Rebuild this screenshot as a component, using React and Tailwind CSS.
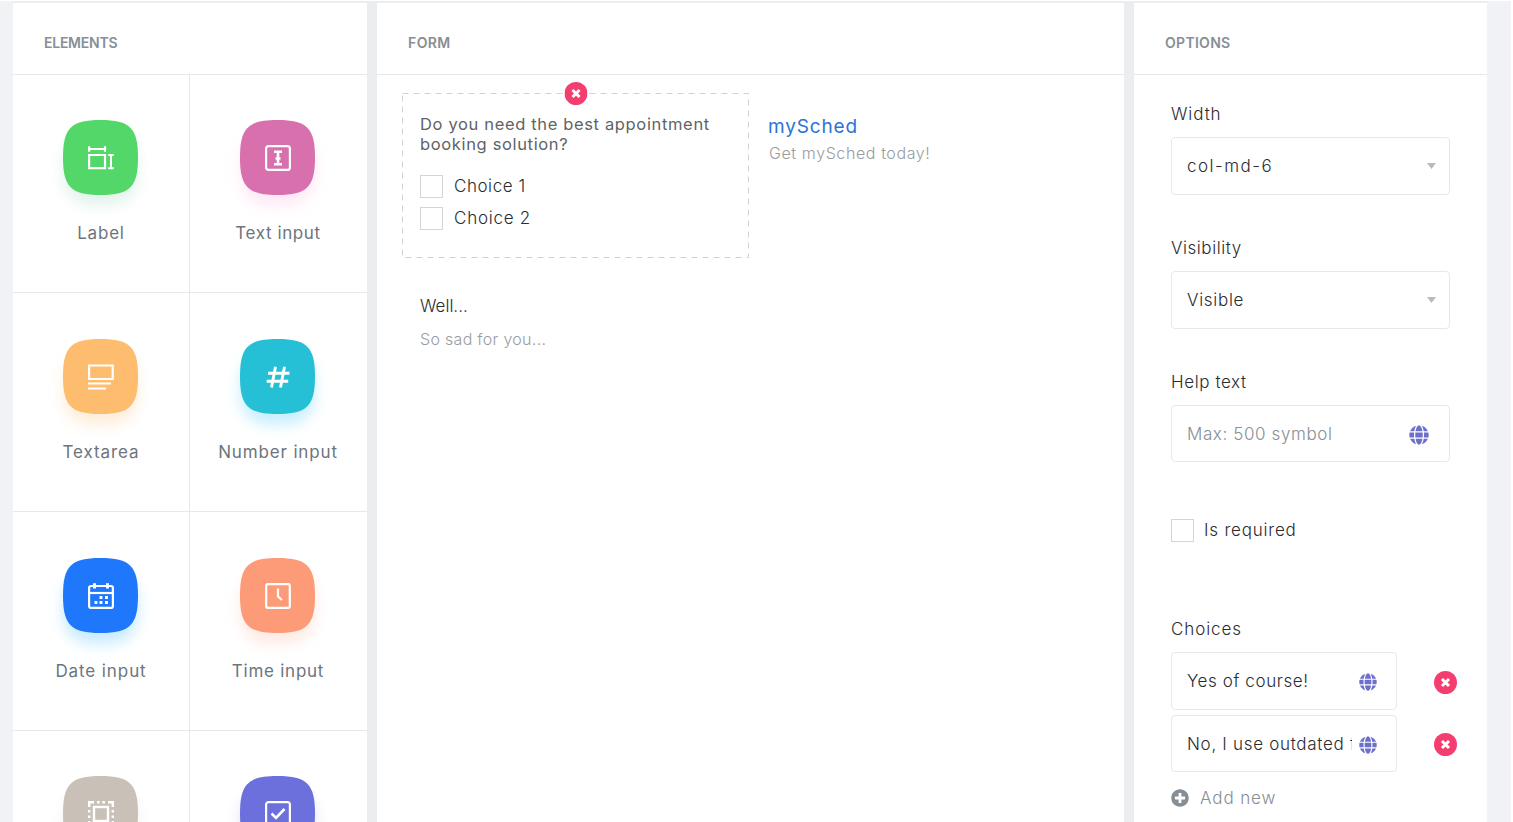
import { useState } from 'react';
import { FaGlobe, FaPlusCircle } from 'react-icons/fa';

const stroke = {
  fill: 'none',
  stroke: 'currentColor',
  strokeWidth: 2.2,
};

function LabelIcon() {
  return (
    <svg className="w-[26px] h-[26px]" viewBox="0 0 26 26" {...stroke}>
      <path d="M1.100 10h15.900v13.200H1.100zM1.500 4h15.500M1.100 1.300v5.400M17 1.300v5.400" />
      <path strokeWidth="1.900" d="M23 10v13M20.200 10h5.600M20.200 23.300h5.600" />
    </svg>
  );
}

function TextIcon() {
  return (
    <svg className="w-[26px] h-[26px]" viewBox="0 0 26 26" {...stroke}>
      <rect x="1.100" y="1.100" width="23.800" height="23.800" rx="2.500" />
      <path strokeWidth="2.600" d="M13 6.500v13M9 6.800h8M9 19.200h8M10.500 13.500h5" />
    </svg>
  );
}

function TextareaIcon() {
  return (
    <svg className="w-[26px] h-[26px]" viewBox="0 0 26 26" {...stroke}>
      <path d="M1.100 1.500h23.600v13.500H1.100zM0 19.500h23M0 24.500h18" />
    </svg>
  );
}

function NumberIcon() {
  return (
    <svg className="w-[26px] h-[26px]" viewBox="0 0 26 26" {...stroke} strokeWidth="2.900">
      <path d="M10.500 2.800L6.500 23.500M19.500 2.800L15.500 23.500M3 9.300h21.500M1.700 17.300h21.500" />
    </svg>
  );
}

function DateIcon() {
  return (
    <svg className="w-[26px] h-[26px]" viewBox="0 0 26 26" {...stroke}>
      <rect x="1.100" y="3" width="23.800" height="21.900" rx="2" />
      <path d="M1 10h24" />
      <path strokeWidth="3" d="M6.500 .3v5.200M19.500 .3v5.200" />
      <path
        strokeWidth="2.800"
        d="M11.500 14.500h2.900M17 14.500h2.900M6.500 19.500h2.900M11.500 19.500h2.900M17 19.500h2.900"
      />
    </svg>
  );
}

function TimeIcon() {
  return (
    <svg className="w-[26px] h-[26px]" viewBox="0 0 26 26" {...stroke}>
      <rect x="1.200" y="1.200" width="23.600" height="23.600" rx="1.500" />
      <path d="M13 5.500v8l4 3.500" />
    </svg>
  );
}

function SelectIcon() {
  return (
    <svg className="w-[26px] h-[26px]" viewBox="0 0 26 26" {...stroke}>
      <rect x="6" y="6" width="14" height="14" strokeWidth="2.400" />
      {/* corner brackets with two dashes between them on each side */}
      <path
        strokeWidth="2.400"
        d="M1.200 6V1.200H6M20 1.200h4.800V6M24.800 20v4.800H20M6 24.800H1.200V20M9 1.200h2.600M14.400 1.200H17M9 24.800h2.600M14.400 24.800H17M1.200 9v2.600M1.200 14.400V17M24.800 9v2.600M24.800 14.400V17"
      />
    </svg>
  );
}

function CheckIcon() {
  return (
    <svg className="w-[26px] h-[26px]" viewBox="0 0 26 26" {...stroke}>
      <rect x="1.100" y="1.100" width="23.800" height="23.800" rx="2.500" />
      <path strokeWidth="2.600" d="M6.500 12.500l4.500 4.500L19.500 8" />
    </svg>
  );
}

const elements = [
  { name: 'Label', icon: LabelIcon, color: 'text-[#53d769]', shadow: 'bg-[#53b789]/15', tracking: 'tracking-[0.8px]' },
  { name: 'Text input', icon: TextIcon, color: 'text-[#d770ad]', shadow: 'bg-[#ff70c0]/15', tracking: 'tracking-[0.6px]' },
  { name: 'Textarea', icon: TextareaIcon, color: 'text-[#fdbc6e]', shadow: 'bg-[#fdbc6e]/25', tracking: 'tracking-[0.9px]' },
  { name: 'Number input', icon: NumberIcon, color: 'text-[#26c0d6]', shadow: 'bg-[#26c0f6]/25', tracking: 'tracking-[0.85px]' },
  { name: 'Date input', icon: DateIcon, color: 'text-[#1f78fb]', shadow: 'bg-[#26b0ff]/25', tracking: 'tracking-[0.9px]' },
  { name: 'Time input', icon: TimeIcon, color: 'text-[#fd9b78]', shadow: 'bg-[#fd9b78]/20', tracking: 'tracking-[0.75px]' },
  { icon: SelectIcon, color: 'text-[#c9c0b8]', shadow: 'bg-[#c9c0b8]/20' },
  { icon: CheckIcon, color: 'text-[#6c70dc]', shadow: 'bg-[#6c70dc]/20' },
];

function ElementCard({ item }) {
  const Icon = item.icon;

  return (
    <div className="flex flex-col items-center h-[219px] pt-[46px] odd:pr-px even:pr-0.5 nth-[n+7]:pt-[45px] border-b border-r border-[#e6e8ea] even:border-r-0">
      <div className="relative w-[75px] h-[75px] flex items-center justify-center">
        <div className={`absolute inset-x-0 top-[14px] h-[72px] rounded-[28px] blur-[7px] ${item.shadow}`} />
        <svg className={`absolute inset-0 w-full h-full ${item.color}`} viewBox="0 0 75 75" fill="currentColor">
          <path d="M37.500 0C67 0 75 8 75 37.500S67 75 37.500 75 0 67 0 37.500 8 0 37.500 0z" />
        </svg>
        <div className="relative text-white">
          <Icon />
        </div>
      </div>
      {item.name && (
        <p className={`mt-[26px] pl-px text-[17px] leading-6 text-[#6c757d] font-[380] ${item.tracking}`}>{item.name}</p>
      )}
    </div>
  );
}

function PanelHeader({ title, className }) {
  return (
    <div className={`h-[72px] shrink-0 pt-2 pl-[31px] flex items-center border-b border-[#e6e8ea] ${className}`}>
      <h2 className="text-sm font-semibold text-[#868e96]">{title}</h2>
    </div>
  );
}

function RemoveButton() {
  return (
    <button className="flex">
      <svg className="w-[23px] h-[23px]" viewBox="0 0 23 23">
        <circle cx="11.500" cy="11.500" r="11.500" fill="#f43e6f" />
        <path d="M8 8l7 7M15 8l-7 7" stroke="#fff" strokeWidth="3" />
      </svg>
    </button>
  );
}

function Checkbox({ label, className }) {
  const [checked, setChecked] = useState(false);

  return (
    <label className="flex items-center">
      <input
        type="checkbox"
        checked={checked}
        onChange={(e) => setChecked(e.target.checked)}
        className="appearance-none w-[23px] h-[23px] border border-[#d3d6d9] bg-white checked:bg-[#6c70dc]"
      />
      <span className={`mb-0.5 text-[17px] leading-5 text-[#292d32] ${className}`}>{label}</span>
    </label>
  );
}

function SelectField({ label, value, labelClass, valueClass }) {
  return (
    <div className="h-[134px]">
      <p className={`text-[17px] leading-6 text-[#292d32] ${labelClass}`}>{label}</p>
      <div className="mt-[11px] h-[58px] pl-[15px] pr-[13px] flex items-center justify-between border border-[#e6e8ea] rounded-sm">
        <span className={`mt-0.5 text-[17px] text-[#292d32] ${valueClass}`}>{value}</span>
        <svg className="w-[9px] h-1.5 text-[#b4bcc0]" viewBox="0 0 9 6" fill="currentColor">
          <path d="M0 0h9L4.500 6z" />
        </svg>
      </div>
    </div>
  );
}

function ChoiceRow({ value, className, textClass }) {
  return (
    <div className="flex items-center">
      <div className={`w-[226px] shrink-0 pl-[15px] flex items-center border border-[#e6e8ea] rounded-sm ${className}`}>
        <span className={`w-[165px] mt-0.5 mr-[7px] shrink-0 overflow-hidden whitespace-nowrap text-[17px] text-[#292d32] ${textClass}`}>
          {value}
        </span>
        <FaGlobe className="w-[18px] h-[18px] mt-0.5 shrink-0 text-[#6c70cc]" />
      </div>
      <div className="ml-[37px] mt-0.5">
        <RemoveButton />
      </div>
    </div>
  );
}

export default function App() {
  return (
    <div className="h-[822px] overflow-hidden bg-[#f1f2f6] border-t border-r-2 border-white font-['Inter',sans-serif] font-[350]">
      <div className="flex gap-[10px] w-[1474px] h-full ml-[13px] pt-0.5 bg-[#ebedef]">
        <section className="w-[354px] shrink-0 bg-white">
          <PanelHeader title="ELEMENTS" className="tracking-[-0.25px]" />
          <div className="grid grid-cols-2 -mt-px">
            {elements.map((item, index) => (
              <ElementCard key={index} item={item} />
            ))}
          </div>
        </section>

        <section className="w-[747px] shrink-0 bg-white">
          <PanelHeader title="FORM" className="tracking-[0.4px]" />
          <div className="grid grid-cols-[347px_1fr] pl-[25px] pt-[18px]">
            <div className="relative h-[165px] pl-[18px] pt-[21px]">
              <svg className="absolute inset-0 w-full h-full" fill="none">
                <rect x="0.500" y="0.500" width="346" height="164" stroke="#cfd2d4" strokeDasharray="6 5" />
              </svg>
              <div className="absolute -top-[11px] left-1/2 -translate-x-1/2">
                <RemoveButton />
              </div>
              <p className="text-[16.5px] leading-5 text-[#5f6366] font-normal tracking-[0.65px] whitespace-nowrap">
                Do you need the best appointment
                <br />
                booking solution?
              </p>
              <div className="mt-[21px] flex flex-col gap-[9px]">
                <Checkbox label="Choice 1" className="ml-[11px] tracking-[0.55px]" />
                <Checkbox label="Choice 2" className="ml-[11px] tracking-[0.75px]" />
              </div>
            </div>
            <div className="pl-[19px] pt-[22px]">
              <h3 className="text-[19px] leading-6 text-[#2b74d3] font-normal tracking-[0.85px]">mySched</h3>
              <p className="mt-0.5 ml-px text-[16px] leading-6 text-[#999c9e] tracking-[0.6px]">Get mySched today!</p>
            </div>
            <div className="pl-[18px] pt-9">
              <p className="text-[17px] leading-6 text-[#292d32]">Well...</p>
              <p className="mt-[9px] text-[16px] leading-6 text-[#999c9e] tracking-[0.3px]">So sad for you...</p>
            </div>
          </div>
        </section>

        <section className="w-[353px] shrink-0 bg-white">
          <PanelHeader title="OPTIONS" className="tracking-[0.3px]" />
          <div className="px-[37px] pt-[27px]">
            <SelectField
              label="Width"
              value="col-md-6"
              labelClass="tracking-[0.9px]"
              valueClass="tracking-[1.5px]"
            />
            <SelectField
              label="Visibility"
              value="Visible"
              labelClass="tracking-[0.55px]"
              valueClass="tracking-[0.7px]"
            />

            <p className="text-[17px] leading-6 text-[#292d32] tracking-[0.6px]">Help text</p>
            <div className="mt-[11px] h-[57px] pl-[15px] pr-5 flex items-center justify-between border border-[#e6e8ea] rounded-sm">
              <input
                type="text"
                placeholder="Max: 500 symbol"
                className="w-[190px] mt-0.5 text-[17px] tracking-[0.6px] placeholder:text-[#868e96] focus:outline-none"
              />
              <FaGlobe className="w-5 h-5 mt-[3px] text-[#6c70cc]" />
            </div>

            <div className="mt-[57px]">
              <Checkbox label="Is required" className="ml-[10px] tracking-[0.8px]" />
            </div>

            <p className="mt-[75px] text-[17px] leading-6 text-[#292d32] tracking-[0.9px]">Choices</p>
            <div className="mt-[11px] flex flex-col gap-[5px]">
              <ChoiceRow value="Yes of course!" className="h-[58px]" textClass="tracking-[0.6px]" />
              <ChoiceRow value="No, I use outdated forms" className="h-[57px]" textClass="tracking-[0.7px]" />
            </div>
            <button className="mt-[14px] flex items-center text-[#868e96]">
              <FaPlusCircle className="w-[18px] h-[18px]" />
              <span className="ml-[11px] text-[17px] leading-6 tracking-[0.9px]">Add new</span>
            </button>
          </div>
        </section>
      </div>
    </div>
  );
}
